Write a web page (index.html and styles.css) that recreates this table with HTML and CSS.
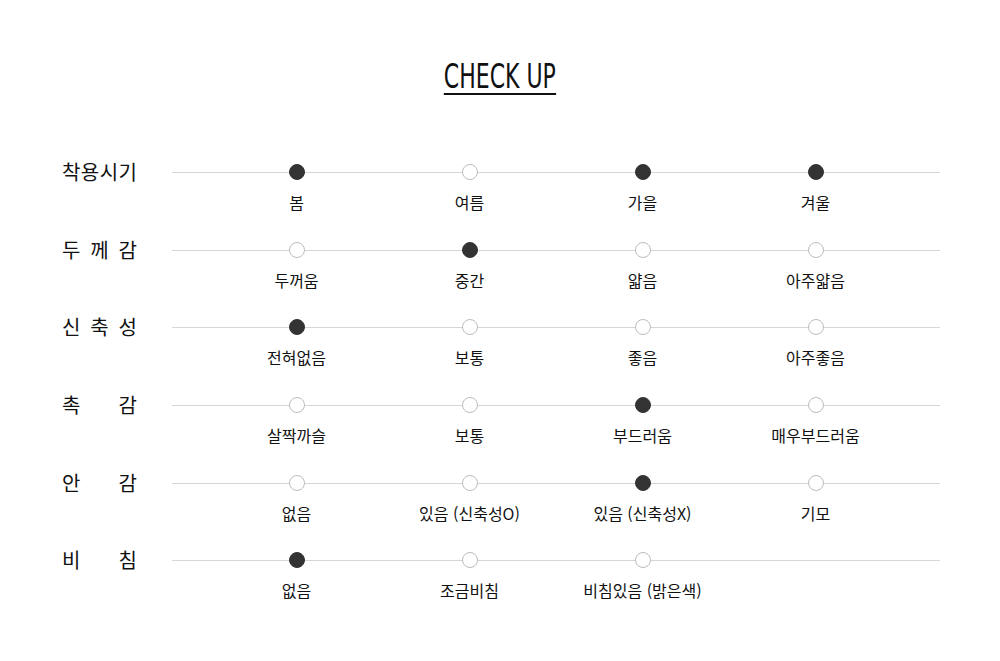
FILE: index.html
```html
<!DOCTYPE html>
<html lang="ko">
<head>
<meta charset="utf-8">
<title>CHECK UP</title>
<link rel="stylesheet" href="styles.css">
</head>
<body>
<div class="page">
  <div class="title-wrap"><h1 class="title">CHECK UP</h1></div>
  <div class="table">
    <div class="row">
      <div class="label"><span>착</span><span>용</span><span>시</span><span>기</span></div>
      <div class="track">
        <div class="opt"><i class="dot on"></i><span class="txt">봄</span></div>
        <div class="opt"><i class="dot"></i><span class="txt">여름</span></div>
        <div class="opt"><i class="dot on"></i><span class="txt">가을</span></div>
        <div class="opt"><i class="dot on"></i><span class="txt">겨울</span></div>
      </div>
    </div>
    <div class="row">
      <div class="label"><span>두</span><span>께</span><span>감</span></div>
      <div class="track">
        <div class="opt"><i class="dot"></i><span class="txt">두꺼움</span></div>
        <div class="opt"><i class="dot on"></i><span class="txt">중간</span></div>
        <div class="opt"><i class="dot"></i><span class="txt">얇음</span></div>
        <div class="opt"><i class="dot"></i><span class="txt">아주얇음</span></div>
      </div>
    </div>
    <div class="row">
      <div class="label"><span>신</span><span>축</span><span>성</span></div>
      <div class="track">
        <div class="opt"><i class="dot on"></i><span class="txt">전혀없음</span></div>
        <div class="opt"><i class="dot"></i><span class="txt">보통</span></div>
        <div class="opt"><i class="dot"></i><span class="txt">좋음</span></div>
        <div class="opt"><i class="dot"></i><span class="txt">아주좋음</span></div>
      </div>
    </div>
    <div class="row">
      <div class="label"><span>촉</span><span>감</span></div>
      <div class="track">
        <div class="opt"><i class="dot"></i><span class="txt">살짝까슬</span></div>
        <div class="opt"><i class="dot"></i><span class="txt">보통</span></div>
        <div class="opt"><i class="dot on"></i><span class="txt">부드러움</span></div>
        <div class="opt"><i class="dot"></i><span class="txt">매우부드러움</span></div>
      </div>
    </div>
    <div class="row">
      <div class="label"><span>안</span><span>감</span></div>
      <div class="track">
        <div class="opt"><i class="dot"></i><span class="txt">없음</span></div>
        <div class="opt"><i class="dot"></i><span class="txt">있음 (신축성O)</span></div>
        <div class="opt"><i class="dot on"></i><span class="txt">있음 (신축성X)</span></div>
        <div class="opt"><i class="dot"></i><span class="txt">기모</span></div>
      </div>
    </div>
    <div class="row">
      <div class="label"><span>비</span><span>침</span></div>
      <div class="track">
        <div class="opt"><i class="dot on"></i><span class="txt">없음</span></div>
        <div class="opt"><i class="dot"></i><span class="txt">조금비침</span></div>
        <div class="opt"><i class="dot"></i><span class="txt">비침있음 (밝은색)</span></div>
      </div>
    </div>
  </div>
</div>
</body>
</html>
```
FILE: styles.css
```css
html, body {
  margin: 0;
  padding: 0;
  background: #fff;
}
body {
  font-family: "Noto Sans CJK KR", "Noto Sans", sans-serif;
  color: #111;
}
.page {
  width: 1000px;
  height: 661px;
}
.title-wrap {
  display: flex;
  justify-content: center;
  padding-top: 59px;
}
.title {
  margin: 0;
  font-family: "DejaVu Sans Condensed", "Liberation Sans Narrow", sans-serif;
  font-weight: 400;
  font-size: 34px;
  line-height: 34px;
  height: 34px;
  color: #111;
  border-bottom: 2px solid #111;
  transform: scaleX(0.72);
  letter-spacing: 0;
}
.table {
  padding-top: 69px;
  padding-left: 62px;
  display: flex;
  flex-direction: column;
}
.row {
  display: flex;
  height: 77.7px;
}
.label {
  width: 75px;
  height: 16px;
  display: flex;
  justify-content: space-between;
  align-items: center;
  font-size: 20px;
  color: #111;
  margin-right: 35px;
}
.label span {
  line-height: 16px;
}
.track {
  position: relative;
  width: 768px;
  padding: 0 38px;
  box-sizing: border-box;
  display: grid;
  grid-template-columns: repeat(4, 173px);
  align-content: start;
}
.track::before {
  content: "";
  position: absolute;
  left: 0;
  right: 0;
  top: 8px;
  height: 1px;
  background: #d6d6d6;
}
.opt {
  position: relative;
  display: flex;
  flex-direction: column;
  align-items: center;
}
.dot {
  display: block;
  width: 16px;
  height: 16px;
  box-sizing: border-box;
  border-radius: 50%;
  border: 1px solid #bdbdbd;
  background: #fff;
}
.dot.on {
  background: #333;
  border-color: #333;
}
.txt {
  margin-top: 11px;
  font-size: 16px;
  line-height: 22px;
  color: #111;
  white-space: nowrap;
}
```
